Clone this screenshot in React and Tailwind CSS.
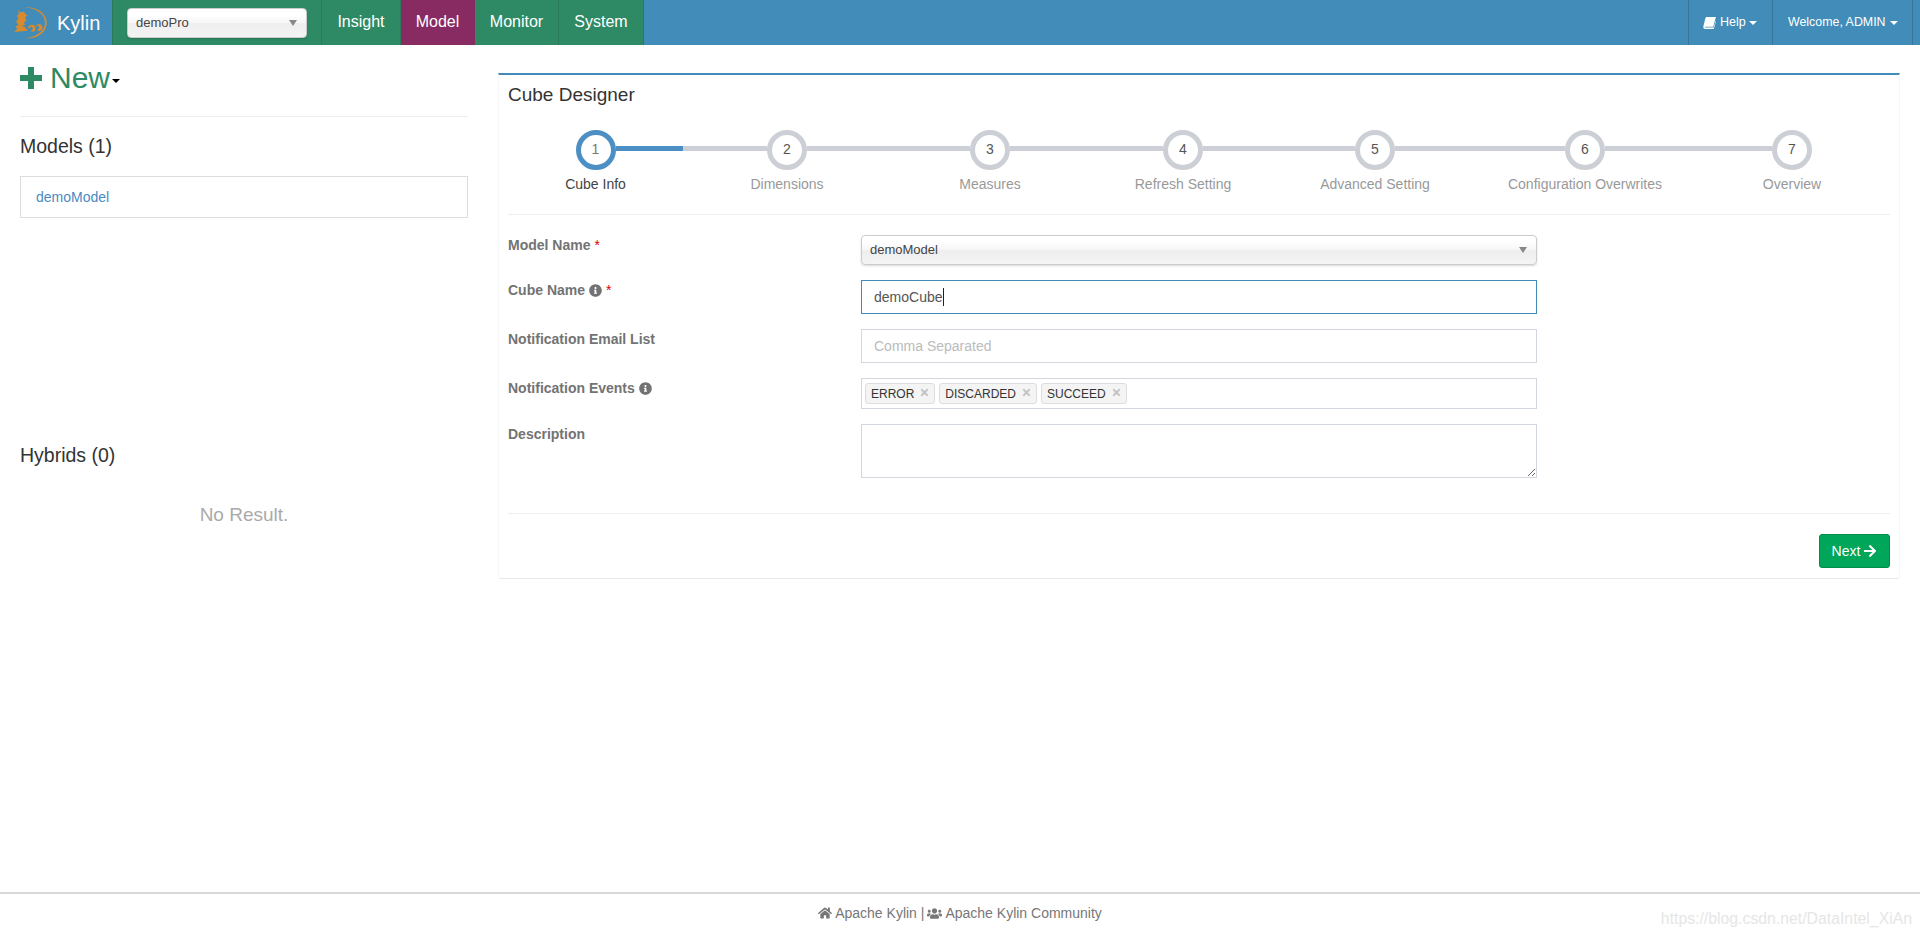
import { FaInfoCircle, FaHome, FaUsers, FaArrowRight, FaTimes } from 'react-icons/fa'

const navItems = [
  { label: 'Insight', width: 'w-[79px]' },
  { label: 'Model', width: 'w-[74px]', active: true },
  { label: 'Monitor', width: 'w-[84px]' },
  { label: 'System', width: 'w-[85px]' },
]

const steps = [
  { label: 'Cube Info', width: 'w-[175px]' },
  { label: 'Dimensions', width: 'w-[208px]' },
  { label: 'Measures', width: 'w-[198px]' },
  { label: 'Refresh Setting', width: 'w-[188px]' },
  { label: 'Advanced Setting', width: 'w-[196px]' },
  { label: 'Configuration Overwrites', width: 'w-[224px]' },
  { label: 'Overview', width: 'w-[190px]' },
]

const events = ['ERROR', 'DISCARDED', 'SUCCEED']

const selectSkin =
  'flex items-center justify-between rounded-[4px] border border-[#ccc] bg-[linear-gradient(#fff_20%,#f6f6f6_50%,#eee_52%,#f4f4f4_100%)] shadow-[0_1px_2px_rgba(0,0,0,0.15)] text-[13px] text-[#444]'

function KylinLogo() {
  return (
    <svg viewBox="0 0 34 32" className="h-[32px] w-[34px]" fill="#d98a2c">
      <path d="M12 .8C23 -1.2 33.5 6 33.7 15.500C33.900 25.500 24 32.500 12 31.200C21 30.500 32 25.500 32 15.500C32 7 23 .8 12 .8Z" />
      <path d="M5 3l2.500 2.500L11 4.500l1 2.500 2.500 1-2.500 2.500 1.500 3-2.500 2 1 2.500-3.500 1 3.500 1 2.500 3.500-3 .500L1 25l3-2.500-1-3 2.500-2-2.500-3 2.500-2.500L4 8.500l2-1.500z" />
      <path d="M15 21.500a3.800 3.800 0 1 1 7 2a3 3 0 0 1-4 .8l1-1.500a1.500 1.500 0 1 0-2-2z" />
      <path d="M22.500 20a3.500 3.500 0 1 1 6 3c-1.500 1.500-3.500 1-4.200 0l1-1.200a1.500 1.500 0 1 0-1.300-2.800z" />
    </svg>
  )
}

function BookIcon() {
  return (
    <svg viewBox="0 0 14 13" className="h-[12px] w-[13px]" fill="white">
      <path d="M4 0H14L11 10.500H2.500C1.800 10.500 1.500 11 2.800 11.500H11.500L13.500 4.500L14 5L11.800 12.500C11.700 12.800 11.500 13 11 13H2.500C1 13 0 11.800 .3 10.300L2.500 1.500C2.700 .6 3.300 0 4 0Z" />
    </svg>
  )
}

function PlusIcon() {
  return (
    <svg viewBox="0 0 22 22" className="h-[22px] w-[22px]" fill="#2e8a64">
      <path d="M8 0h6v8h8v6h-8v8H8v-8H0V8h8z" />
    </svg>
  )
}

function Caret({ className = 'border-t-white' }) {
  return <span className={`inline-block h-0 w-0 border-x-[4px] border-t-[4px] border-x-transparent ${className}`} />
}

function SelectArrow() {
  return (
    <svg viewBox="0 0 8 6" className="h-[6px] w-[8px]" fill="#888">
      <polygon points="0,0 8,0 4,6" />
    </svg>
  )
}

function Step({ label, width, index }) {
  const active = index === 0
  return (
    <div className={`flex flex-col ${width}`}>
      <div className="flex items-center">
        <div className={`mt-[-3px] h-[5px] flex-1 ${index > 0 ? 'bg-[#ccd0d6]' : ''}`} />
        <div
          className={`flex h-[40px] w-[40px] items-center justify-center rounded-full border-[5px] bg-white pb-[2px] text-[14px] ${
            active ? 'border-[#4b8fc4] text-[#777]' : 'border-[#ccd0d6] text-[#555]'
          }`}
        >
          {index + 1}
        </div>
        <div
          className={`mt-[-3px] h-[5px] flex-1 ${
            active ? 'bg-[#4b8fc4]' : index < steps.length - 1 ? 'bg-[#ccd0d6]' : ''
          }`}
        />
      </div>
      <div className={`mt-[4px] text-center text-[14px] leading-5 ${active ? 'text-[#444]' : 'text-[#999]'}`}>
        {label}
      </div>
    </div>
  )
}

function FormRow({ label, children }) {
  return (
    <div className="flex">
      <div className="flex w-[353px] items-center gap-[4px] self-start text-[14px] font-bold leading-5 text-[#737373]">
        {label}
      </div>
      <div className="w-[676px]">{children}</div>
    </div>
  )
}

export default function App() {
  return (
    <div className="flex h-screen flex-col overflow-hidden bg-white font-['Liberation_Sans',Arial,sans-serif] text-[#333]">
      <header className="flex h-[45px] shrink-0 bg-[#428cb9] text-white">
        <div className="flex w-[112px] items-center pl-[13px]">
          <KylinLogo />
          <span className="ml-[10px] text-[20px]">Kylin</span>
        </div>
        <div className="flex w-[210px] items-center border-x border-[#2a7a5c] bg-[#2e8a64] pl-[14px]">
          <div className={`${selectSkin} h-[30px] w-[180px] pl-[8px] pr-[9px]`}>
            demoPro
            <SelectArrow />
          </div>
        </div>
        <nav className="flex">
          {navItems.map((item) => (
            <a
              key={item.label}
              className={`flex items-center justify-center border-r pb-[1px] text-[16px] ${item.width} ${
                item.active ? 'border-[#872b62] bg-[#872b62]' : 'border-[#2a7a5c] bg-[#2e8a64]'
              }`}
            >
              {item.label}
            </a>
          ))}
        </nav>
        <div className="ml-auto flex">
          <div className="flex w-[84px] items-center gap-[3px] border-l border-[#37759c] pl-[14px]">
            <BookIcon />
            <span className="ml-[1px] text-[12.500px]">Help</span>
            <Caret />
          </div>
          <div className="flex w-[140px] items-center gap-[4px] border-l border-[#37759c] pl-[15px]">
            <span className="text-[12.400px]">Welcome, ADMIN</span>
            <Caret />
          </div>
          <div className="w-[8px] border-l border-[#37759c]" />
        </div>
      </header>

      <main className="flex flex-1">
        <aside className="ml-[20px] w-[448px] shrink-0">
          <div className="flex h-[72px] items-start border-b border-[#eee] pt-[15px]">
            <div className="flex items-center text-[#2e8a64]">
              <PlusIcon />
              <span className="ml-[8px] text-[30px] leading-[36px]">New</span>
              <Caret className="ml-[2px] mt-[6px] border-t-black" />
            </div>
          </div>
          <h4 className="mt-[18px] text-[19.500px] leading-[22px] text-[#333]">Models (1)</h4>
          <div className="mt-[19px] flex h-[42px] items-center border border-[#ddd] pl-[15px] text-[14px] text-[#4a8ac4]">
            demoModel
          </div>
          <h4 className="mt-[226px] text-[19.500px] leading-[22px] text-[#333]">Hybrids (0)</h4>
          <div className="mt-[38px] text-center text-[19px] leading-[22px] text-[#aaa]">No Result.</div>
        </aside>

        <section className="ml-[30px] mt-[28px] h-[506px] w-[1402px] rounded-b-[3px] border-x border-b border-x-[#f7f7f7] border-b-[#e8e8e8] border-t-2 border-t-[#428cb9] px-[9px]">
          <h3 className="mt-[6px] text-[19px] leading-[28px] text-[#333]">Cube Designer</h3>

          <div className="mt-[21px] flex border-b border-[#eee] pb-[20px]">
            {steps.map((step, index) => (
              <Step key={step.label} index={index} {...step} />
            ))}
          </div>

          <form className="mt-[20px] flex flex-col gap-[15px]">
            <FormRow
              label={
                <>
                  Model Name <span className="font-normal text-[#e00000]">*</span>
                </>
              }
            >
              <div className={`${selectSkin} h-[30px] pl-[8px] pr-[9px]`}>
                demoModel
                <SelectArrow />
              </div>
            </FormRow>
            <FormRow
              label={
                <>
                  Cube Name <FaInfoCircle className="text-[13px]" />
                  <span className="font-normal text-[#e00000]">*</span>
                </>
              }
            >
              <div className="flex h-[34px] items-center border border-[#428cb9] pl-[12px] text-[14px] text-[#555]">
                demoCube
                <span className="h-[18px] w-px bg-[#222]" />
              </div>
            </FormRow>
            <FormRow label="Notification Email List">
              <input
                placeholder="Comma Separated"
                className="block h-[34px] w-full border border-[#d2d6de] px-[12px] text-[14px] outline-none placeholder:text-[#bbb]"
              />
            </FormRow>
            <FormRow
              label={
                <>
                  Notification Events <FaInfoCircle className="text-[13px]" />
                </>
              }
            >
              <div className="flex h-[31px] items-center gap-[4px] border border-[#d2d6de] pl-[3px]">
                {events.map((name) => (
                  <span
                    key={name}
                    className="flex h-[21px] items-center gap-[5px] rounded-[3px] border border-[#ddd] bg-[#f4f4f4] pl-[5px] pr-[4px] text-[12px] text-[#333]"
                  >
                    {name}
                    <FaTimes className="mb-[3px] text-[11px] text-[#c4c4c4]" />
                  </span>
                ))}
              </div>
            </FormRow>
            <FormRow label="Description">
              <textarea className="block h-[54px] w-full resize-y border border-[#d2d6de] outline-none" />
            </FormRow>
          </form>

          <div className="mt-[35px] flex justify-end border-t border-[#eee] pt-[20px]">
            <button
              type="button"
              className="flex h-[34px] w-[71px] items-center justify-center gap-[3px] rounded-[3px] border border-[#008d4c] bg-[#00a65a] text-[14px] text-white"
            >
              Next <FaArrowRight className="text-[14px]" />
            </button>
          </div>
        </section>
      </main>

      <footer className="relative flex h-[45px] shrink-0 items-start justify-center border-t-2 border-[#d9d9d9] pt-[9px] text-[14px] leading-5 text-[#777]">
        <span className="flex items-center gap-[3px]">
          <FaHome className="text-[14px]" /> Apache Kylin | <FaUsers className="text-[15px]" /> Apache Kylin Community
        </span>
        <span className="absolute bottom-[8px] right-[8px] text-[15.800px] leading-5 text-[#e6e6e6]">
          https://blog.csdn.net/DataIntel_XiAn
        </span>
      </footer>
    </div>
  )
}
